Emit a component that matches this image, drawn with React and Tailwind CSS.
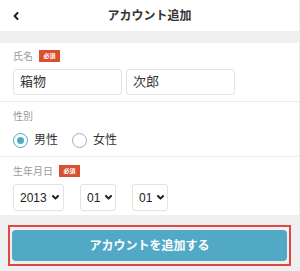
import React, { useState } from "react";

const font = { fontFamily: '"Liberation Sans", "Noto Sans CJK JP", sans-serif' };

const Badge = () => (
  <span className="ml-[6px] inline-flex h-[12px] w-[21px] items-center justify-center bg-[#d9502f] text-[6px] font-bold leading-none text-white">
    必須
  </span>
);

const Chevron = () => (
  <svg width="7" height="5" viewBox="0 0 7 5" className="ml-[5px]">
    <path d="M1 1 L3.5 3.6 L6 1" fill="none" stroke="#222" strokeWidth="2" strokeLinecap="round" strokeLinejoin="round" />
  </svg>
);

const Radio = ({ checked, label, onClick }) => (
  <button type="button" onClick={onClick} className="flex items-center">
    <span
      className={
        checked
          ? "flex h-[15px] w-[15px] items-center justify-center rounded-full border-[1.5px] border-[#4fa8c5]"
          : "flex h-[15px] w-[15px] items-center justify-center rounded-full border-[1.5px] border-[#a8a8a8]"
      }
    >
      {checked && <span className="h-[7px] w-[7px] rounded-full bg-[#4fa8c5]" />}
    </span>
    <span className="ml-[6px] text-[12px] text-[#333]">{label}</span>
  </button>
);

const Select = ({ value, width }) => (
  <div className={`flex h-[27px] items-center rounded-[3px] border border-[#e3e3e3] bg-white pl-[6px] ${width}`}>
    <span className="text-[12px] text-[#222]">{value}</span>
    <Chevron />
  </div>
);

export default function App() {
  const [gender, setGender] = useState("male");

  return (
    <div className="flex h-[271px] w-[300px] flex-col overflow-hidden border-r border-[#ececec] bg-white" style={font}>
      {/* Header */}
      <div className="relative flex h-[31px] items-center justify-center">
        <svg width="6" height="8" viewBox="0 0 6 8" className="absolute left-[13px] top-[12px]">
          <path d="M4.5 1 L1.6 4 L4.5 7" fill="none" stroke="#222" strokeWidth="2" strokeLinecap="round" strokeLinejoin="round" />
        </svg>
        <h1 className="text-[12px] font-bold text-[#333]">アカウント追加</h1>
      </div>
      <div className="h-[12px] bg-[#efefef]" />

      {/* Name */}
      <div className="border-b border-[#ebebeb] px-[13px] pb-[6px] pt-[7px]">
        <div className="flex h-[12px] items-center">
          <span className="text-[10px] text-[#999]">氏名</span>
          <Badge />
        </div>
        <div className="mt-[7px] flex gap-[4px]">
          <div className="flex h-[26px] w-[109px] items-center rounded-[3px] border border-[#e3e3e3] px-[6px] text-[13px] text-[#333]">
            箱物
          </div>
          <div className="flex h-[26px] w-[109px] items-center rounded-[3px] border border-[#e3e3e3] px-[6px] text-[13px] text-[#333]">
            次郎
          </div>
        </div>
      </div>

      {/* Gender */}
      <div className="border-b border-[#ebebeb] px-[13px] pb-[8px] pt-[8px]">
        <div className="flex h-[12px] items-center">
          <span className="text-[10px] text-[#999]">性別</span>
        </div>
        <div className="mt-[10px] flex h-[16px] items-center gap-[14px]">
          <Radio checked={gender === "male"} label="男性" onClick={() => setGender("male")} />
          <Radio checked={gender === "female"} label="女性" onClick={() => setGender("female")} />
        </div>
      </div>

      {/* Birthday */}
      <div className="px-[13px] pb-[4px] pt-[8px]">
        <div className="flex h-[12px] items-center">
          <span className="text-[10px] text-[#999]">生年月日</span>
          <Badge />
        </div>
        <div className="mt-[7px] flex gap-[16px]">
          <Select value="2013" width="w-[51px]" />
          <Select value="01" width="w-[36px]" />
          <Select value="01" width="w-[36px]" />
        </div>
      </div>

      {/* Submit */}
      <div className="flex-1 bg-[#efefef] px-[8px] pt-[10px]">
        <div className="border-2 border-[#e04848] px-[2px] py-[3px]">
          <button
            type="button"
            className="flex h-[31px] w-full items-center justify-center rounded-[4px] bg-[#52a9c6] text-[12px] font-bold text-white"
          >
            アカウントを追加する
          </button>
        </div>
      </div>
    </div>
  );
}
